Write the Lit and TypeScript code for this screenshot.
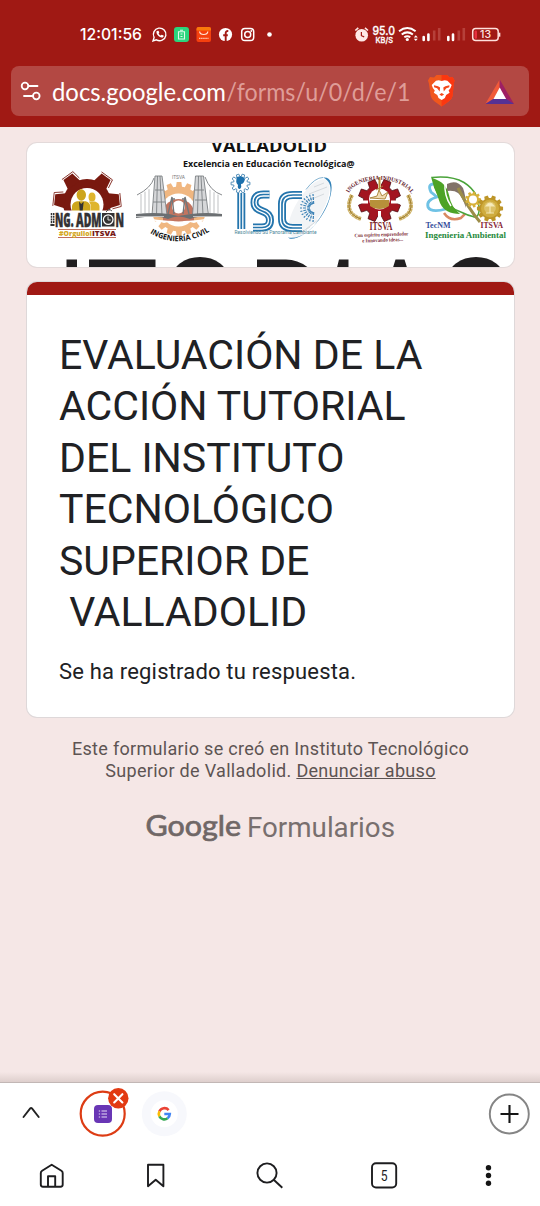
import { LitElement, html, svg, css } from "lit";
import { customElement } from "lit/decorators.js";

/** Outline of a cog wheel. */
function gear(cx: number, cy: number, outer: number, inner: number, teeth: number, turn = 0): string {
  const step = (Math.PI * 2) / teeth;
  const pts: string[] = [];
  for (let i = 0; i < teeth; i++) {
    const a = i * step + turn;
    for (const [r, o] of [[inner, -0.34], [outer, -0.22], [outer, 0.22], [inner, 0.34]]) {
      pts.push(`${(cx + r * Math.cos(a + o * step)).toFixed(2)},${(cy + r * Math.sin(a + o * step)).toFixed(2)}`);
    }
  }
  return `M${pts.join("L")}Z`;
}

/** Text fitted to a given width. */
const fit = (x: number, y: number, w: number, size: number, cls: string, text: string, fill: string) =>
  svg`<text x=${x} y=${y} textLength=${w} lengthAdjust="spacingAndGlyphs" font-size=${size} class=${cls} fill=${fill}>${text}</text>`;

const fonts = css`
  svg { display: block; flex: none; }
  .roboto { font-family: Roboto, sans-serif; }
  .medium { font-family: Roboto, sans-serif; font-weight: 500; }
  .inter { font-family: Inter, sans-serif; font-weight: 500; }
  .lato { font-family: Lato, sans-serif; }
  .open { font-family: "Open Sans", sans-serif; font-weight: 700; }
  .black { font-family: "Open Sans", sans-serif; font-weight: 800; }
  .serif { font-family: "Liberation Serif", serif; font-weight: 700; }
  .sans { font-family: "Liberation Sans", sans-serif; font-weight: 700; }
`;

@customElement("status-bar")
class StatusBar extends LitElement {
  static styles = [fonts, css`
    :host { display: flex; justify-content: space-between; height: 66px; padding: 22px 38px 0 78px; box-sizing: border-box; }
    .group { display: flex; }
  `];
  render() {
    const signal = (x: number) => svg`
      <path d="M${x} 37v3M${x + 4.700} 34.500v5.500" stroke="#fff" stroke-width="2.600" stroke-linecap="round"/>
      <path d="M${x + 10.5} 30.5v10M${x + 15.500} 28v12.5" stroke="#bd4d47" stroke-width="2.600" opacity=".75"/>`;
    return html`
      <div class="group">
        <svg width="72" height="26" viewBox="78 22 72 26">${fit(80, 40.3, 62, 16, "inter", "12:01:56", "#fff")}</svg>
        <svg width="126" height="26" viewBox="150 22 126 26" fill="none">
          <path d="M153 41l1.1-3.6a6.3 6.3 0 1 1 2.3 2.4z" stroke="#fff" stroke-width="1.4"/>
          <path d="M156.8 31c-1.6 2.2 2.7 7.3 5.8 6.4 1-.3 1.3-1.5.9-1.8l-1.8-.9-1 .9c-1-.3-1.8-1.2-2.1-2l.7-1-.8-1.9z" fill="#fff"/>
          <rect x="174" y="27" width="15" height="15" rx="3" fill="#2ad57c"/>
          <path d="M180 30.2h3M178.5 31.7h6v7.3h-6zM180.5 34h2M180.5 36.5h2" stroke="#dffbea" stroke-width="1.1"/>
          <rect x="196.5" y="27" width="14.5" height="15" rx="2" fill="#f5400e"/>
          <path d="M196.5 30.5v-1.5q0-2 2-2h10.500q2 0 2 2v1.500z" fill="#f9790b"/>
          <path d="M199.600 31.500q.2 3 4.100 3t4.100-3" stroke="#ffe3d6" stroke-width="1.200"/>
          <path d="M199 38.300h9.500" stroke="#ffc5b0" stroke-width="1.200" stroke-dasharray="1.500 .6"/>
          <circle cx="225.500" cy="34.500" r="6.600" fill="#fff"/>
          <path d="M225.700 41.200v-8.200q0-2.200 2.600-1.900M223.200 35.200h4.600" stroke="#a31b15" stroke-width="1.900"/>
          <rect x="241.700" y="28.500" width="12" height="12" rx="3.300" stroke="#fff" stroke-width="1.500"/>
          <circle cx="247.700" cy="34.500" r="3" stroke="#fff" stroke-width="1.500"/><circle cx="251.300" cy="31" r=".9" fill="#fff"/>
          <circle cx="269.500" cy="34.500" r="2.300" fill="#fff"/>
        </svg>
      </div>
      <svg width="150" height="26" viewBox="352 22 150 26" fill="none">
        <circle cx="361.700" cy="35.200" r="6.300" fill="#ffe9e6"/>
        <path d="M355.300 30.500l3-2.700M368 30.500l-3-2.700" stroke="#ffe9e6" stroke-width="1.600"/>
        <path d="M361.400 32v3.700l2.800 1.200" stroke="#a31b15" stroke-width="1.200"/>
        <g stroke="#fff" stroke-width=".3">${fit(372.500, 35.300, 22.500, 11.500, "inter", "95.0", "#fff")}
        ${fit(375.500, 42.500, 17.500, 8.200, "inter", "KB/S", "#fff")}</g>
        <g stroke="#fff" stroke-width="2"><path d="M399 31.200q8.300-6.400 16.600 0M401.700 34.500q5.600-4.300 11.200 0M404.300 37.300q3-2.200 6 0"/></g>
        <circle cx="407.300" cy="39.500" r="1.600" fill="#fff"/>
        <path d="M413.800 37.600l2-2.300 2 2.300zM413.800 38.800l2 2.300 2-2.300z" fill="#fff"/>
        ${signal(423.700)}${signal(448.300)}
        <rect x="472.700" y="28.600" width="25.500" height="12" rx="3" stroke="#ffe0dc" stroke-width="1.500"/>
        <path d="M499.600 32.700v4" stroke="#ffe0dc" stroke-width="1.500"/>
        <rect x="474.500" y="30.500" width="2.500" height="8.300" rx="1" fill="#e8303f"/>
        ${fit(480, 38, 11, 10, "inter", "13", "#ffe9e6")}
      </svg>`;
  }
}

@customElement("address-bar")
class AddressBar extends LitElement {
  static styles = [fonts, css`
    :host { display: flex; height: 50px; margin: 0 11px; border-radius: 8px; background: #b34843; align-items: center; }
  `];
  render() {
    return html`
      <svg width="40" height="50" viewBox="11 66 40 50" fill="none" stroke="#fff" stroke-width="1.800" stroke-linecap="round">
        <circle cx="25" cy="86" r="3.300"/><path d="M28.500 86H37.500M24 96h8.500"/><circle cx="36.300" cy="96" r="3.300"/>
      </svg>
      <svg width="365" height="50" viewBox="51 66 365 50">
        ${fit(52, 100.500, 174, 25, "lato", "docs.google.com", "#fff")}
        ${fit(226.500, 100.500, 184, 25, "lato", "/forms/u/0/d/e/1", "#df9d98")}
      </svg>
      <svg width="102" height="50" viewBox="416 66 102 50">
        <path d="M434 77.500l2.500-2.500h10.500l2.600 2.500 3-.5 2 3.500-.8 3-1.200 12.500q-.8 3.500-4 5.500l-7 5-7-5q-3-2-3.900-5.500l-1.800-12.500-.9-3 2-3.500z" fill="#f1571c"/>
        <path d="M441.600 75h5.400l2.600 2.500 3-.5 2 3.500-.8 3-1.200 12.500q-.8 3.500-4 5.500l-7 5z" fill="#fb3711"/>
        <path d="M436 80.700l2.700-.5 3 .7 3-.7 2.700.5 4.300 4.200-1.300 3.300-1.800 2.400 1 2.200-3.500 2.200-1.200 3-3.200 2-3.200-2-1.200-3-3.500-2.200 1-2.200-1.800-2.400-1.300-3.300z" fill="#fff"/>
        <path d="M434 85.300l4 .9 2.100 1.400-.5 4-2.500-3.300-3-1zM449.400 85.300l-4 .9-2.100 1.400.5 4 2.500-3.300 3-1zM439.300 94.500l2.400-1.500 2.400 1.500-2.400 1.500z" fill="#f3481a"/>
        <path d="M499.700 79.500L485.300 104l14.400-8.500z" fill="#f15a3a"/>
        <path d="M499.700 79.500L514 104l-14.300-8.500z" fill="#9e1f63"/>
        <path d="M485.300 104H514l-8-5.300h-12.500z" fill="#563195"/>
        <path d="M499.700 87.500l6.400 11.500h-12.600z" fill="#fff"/>
      </svg>`;
  }
}

@customElement("form-banner")
class FormBanner extends LitElement {
  static styles = [fonts, css`
    :host { display: block; box-sizing: border-box; border-radius: 10px; background: #fff; overflow: hidden; box-shadow: 0 0 0 1px #e3dada; }
  `];

  management() {
    const teeth = [-84, -36, 36, 84];
    return svg`
      <g fill="#79190f">
        <circle cx="87" cy="203" r="24"/>
        ${teeth.map((t) => svg`<path transform="rotate(${t} 87 203)" d="M79.500 181l2-10.500h11l2 10.500z"/>
          <path transform="rotate(${t} 87 203)" d="M80.500 169.300h13.500l1.500 9" fill="none" stroke="#79190f" stroke-width=".8"/>`)}
      </g>
      <circle cx="87" cy="204.500" r="16.500" fill="#fff"/>
      <rect x="49" y="210.500" width="77" height="30" fill="#fff"/>
      <ellipse cx="81.300" cy="195" rx="4.700" ry="5.800" fill="#cda51d"/>
      <path d="M72 210.500v-4q0-4 5-5.200h8.600q4.600 1.200 4.600 5.200v4z" fill="#cda51d"/>
      <ellipse cx="92" cy="197" rx="3.500" ry="4.500" fill="#dfb52e"/>
      <path d="M90.500 210.500v-6l-1.500-3h6q4.500 1.500 4.500 5v4z" fill="#dfb52e"/>
      <path d="M79 201.500l2.200 2.500 2.500-2.500-1 9h-3z" fill="#333"/>
      <path d="M51.500 213v13M53.700 213v10" stroke="#333" stroke-width="1.500" stroke-dasharray="2 .7"/>
      <path d="M50.500 225h4" stroke="#333" stroke-width="2"/>
      <g stroke="#333234" stroke-width=".5">
        ${fit(55, 226.500, 18.500, 19, "black", "NG.", "#333234")}
        ${fit(76, 226.500, 25.500, 19, "black", "ADM", "#333234")}
        ${fit(115.500, 226.500, 8.500, 19, "black", "N", "#333234")}
      </g>
      <rect x="102" y="213" width="12.500" height="13.500" fill="#333234"/>
      <circle cx="108.200" cy="219.600" r="4.800" fill="#333" stroke="#fff" stroke-width="1.200"/>
      <path d="M108 216.500v3.500h2.800" fill="none" stroke="#ddd" stroke-width="1"/>
      <path d="M106 212l3-3 3 2" fill="none" stroke="#555" stroke-width="1"/>
      <path d="M58 229.500h58M58 237.500h58" stroke="#b04a35" stroke-width=".8"/>
      ${fit(59, 236, 33, 6.500, "black", "#OrgulloI", "#d5a824")}
      ${fit(92, 236.200, 24, 7.500, "black", "ITSVA", "#771b17")}`;
  }

  civil() {
    const hangers = [141, 145, 149, 210, 214, 218];
    return svg`
      <path d=${gear(179, 209, 27, 22.500, 16)} fill="#f0b781"/>
      <ellipse cx="178.500" cy="210" rx="17" ry="16.500" fill="#fff"/>
      <path d="M163 211a16 16 0 0 1 31 0v10h-31z" fill="#c37560"/>
      <circle cx="178.500" cy="207" r="6.500" fill="#fff"/>
      <path d="M136 216q42 10 86 0v3q-20 .5-28 4-15-5-30 0-10-3.500-28-4z" fill="#fff"/>
      <path d="M170 220q8.500-3 17 0-8.500 3-17 0z" fill="#c37560"/>
      <path d="M168 214l4-17 2 17M189 214l-4-17-2 17M172 199h3M182 199h3" fill="none" stroke="#73777a" stroke-width="1.400"/>
      <g fill="#d6d7d9" stroke="#7d8184" stroke-width=".9">
        <path d="M155 176h7l5 39h-15zM195.500 176h8l5 39h-16z"/>
        <path d="M157.500 176l-1 39M160 176l2 39M155 190h8M198.500 176l-1 39M201 176l2 39M195 190h9M195 200h12M153 202h12"/>
      </g>
      <path d="M137 195q14-7 17-17M205 177q5 14 17 18" fill="none" stroke="#888b8e" stroke-width="1"/>
      <g stroke="#a5a7aa" stroke-width=".7">${hangers.map((x) => svg`<path d="M${x} ${x < 180 ? 194 - (x - 141) * 0.6 : 185 + (x - 202) * 0.6}V213"/>`)}</g>
      <path d="M136 214q18-2 33 0l9 2 13-2q16-2 31 0v3q-22-2-32 2-12 -5-22 0-10-4-32-1z" fill="#6b6f72"/>
      <path d="M136 216.500h28M193 216.500h29" stroke="#bfc1c2" stroke-width="1"/>
      ${fit(172, 179, 13, 4.500, "roboto", "ITSVA", "#777")}
      <path id="civil-arc" d="M150 233Q179 251 212 230" fill="none"/>
      <text class="open" font-size="7.600" fill="#111"><textPath href="#civil-arc" textLength="63" lengthAdjust="spacingAndGlyphs">INGENIERÍA CIVIL</textPath></text>`;
  }

  systems() {
    const rays = Array.from({ length: 13 }, (_, i) => -1.5 + i * 0.25 + Math.PI);
    const letters = "M241.300 193v36M269.500 194.500h-6q-9 0-9 8 0 6 7.500 8.500 8 2.500 8 9 0 7.500-8 7.500h-9M302 195h-9q-11 0-11 9v15q0 9 11 9h9";
    return svg`
      <ellipse cx="309" cy="208" rx="33" ry="13" transform="rotate(-58 309 208)" fill="#f2f4f6"/>
      <path d="M323 177.500c15-2 9 28-7 46-10 12-24 18-28 14 12 2 24-7 32-20 12-18 15-35 3-40z" fill="#3181b7"/>
      <path d="M323 177.500q-8 0-17 12" fill="none" stroke="#86b4d2"/>
      <g stroke="#d5dade" stroke-width="1"><path d="M314 187l10-4M309 194l18-7M307 201l17-7M306 229l12-9M300 233l10-6"/></g>
      ${rays.map((a) => svg`<path d="M${(314 + 4 * Math.cos(a)).toFixed(1)} ${(208 + 4 * Math.sin(a)).toFixed(1)}L${(314 + 14 * Math.cos(a)).toFixed(1)} ${(208 + 14 * Math.sin(a)).toFixed(1)}" stroke="#3c82b6" stroke-width="1.200" stroke-dasharray="3 1"/>`)}
      <path d=${gear(240.500, 183.500, 9.500, 7, 10)} fill="#fff" stroke="#5590ba" stroke-width="1"/>
      <path d="M237 177q6-2 8 2-1 5-4 5 1 3-1 5-3 0-2-4-3-3-1-8z" fill="#1c70ad"/>
      <g fill="none" stroke="#2475ad" stroke-width="8"><path d=${letters}/></g>
      <g fill="none" stroke="#fff" stroke-width="4.400"><path d=${letters}/></g>
      <g fill="none" stroke="#2475ad" stroke-width="1.700"><path d=${letters}/></g>
      ${fit(234.500, 234, 82, 5.500, "roboto", "Resolviendo Su Panorama Cambiante", "#4c8698")}`;
  }

  industrial() {
    return svg`
      <path d=${gear(379.500, 200.500, 21.500, 16, 8, 0.39)} fill="#a31520" stroke="#4c0b12" stroke-width=".8"/>
      <circle cx="379.500" cy="199" r="10.500" fill="#fff"/>
      <path d="M379.500 178v11M355 202h13M391 202h13M379.500 211v12" stroke="#fff" stroke-width="3"/>
      <path d="M379.500 177v13" stroke="#b79336" stroke-width="2"/>
      <path d="M370 200h19v6q-4 3-9.500 3t-9.500-3z" fill="#b7903a"/>
      <path d="M370 198l7-2 2-6 3 6 6-4-3 7zM376 190l7-4" fill="#f0dcb2" stroke="#a77f34" stroke-width=".9"/>
      <g fill="none" stroke-width="4" stroke="#cfb46b"><path d="M352 195q-9 18 9 24M408 195q9 18-9 24" stroke-dasharray="3 .4"/></g>
      <g fill="none" stroke-width="1" stroke="#9c7b2d"><path d="M352 195q-9 18 9 24M408 195q9 18-9 24"/></g>
      <path id="industrial-arc" d="M349 193C357 176 400 174 412 195" fill="none"/>
      <text class="serif" font-size="5.800" fill="#64202b"><textPath href="#industrial-arc" textLength="71" lengthAdjust="spacingAndGlyphs">INGENIERIA INDUSTRIAL</textPath></text>
      ${fit(369.500, 230.300, 23, 12.500, "serif", "ITSVA", "#7a1c28")}
      <g transform="rotate(-2 380 236)">${fit(354.500, 236.300, 54, 5.200, "serif", "Con espíritu emprendedor", "#80303a")}
      ${fit(362, 241.800, 41, 5.200, "serif", "e Innovando ideas...", "#80303a")}</g>`;
  }

  environmental() {
    return svg`
      <path d="M434 184q-7 0-3 8l6 5q-11 3-9 10 3 6 18 2" fill="none" stroke="#6fc2e5" stroke-width="2.800"/>
      <path d="M444 213q6 9 17 5l8-8" fill="none" stroke="#d98961" stroke-width="2.500"/>
      <path d="M432 177.500q20-2 32 5 16 10 15 29-1 7-6 5-5-1-11-4-16-6-23-16-5-9-7-19z" fill="#fff" stroke="#4aa33a" stroke-width="1.500"/>
      <path d="M432 178c10 3 15 8 17 17q2 12 11 19-15 0-20-11-5-13-8-25z" fill="#4da326"/>
      <path d="M445 182q-1 14 6 24" fill="none" stroke="#fff" stroke-width="1.500"/>
      <path d="M447 184q10-5 16 4 3 8 3 20-4-12-8-15t-11-2z" fill="#827269"/>
      <path d="M458 188q10 20 22 34" fill="none" stroke="#9c8d49" stroke-width="3"/>
      <path d=${gear(473, 199.500, 8, 6, 9)} fill="#d8b139"/><circle cx="473" cy="199.500" r="4" fill="#fff"/>
      <path d=${gear(490, 208.500, 13.200, 10.500, 10)} fill="#bd9528"/>
      <circle cx="490" cy="208.500" r="9" fill="#cfac3e"/><circle cx="490" cy="207.500" r="6" fill="#dcc168"/>
      <path d="M490 213v-7M486 206q4-6 8 0zM486 213h8" stroke="#f4e8b4" stroke-width="1.200" fill="#f8edc0"/>
      ${fit(425.500, 228.300, 25, 7.500, "serif", "TecNM", "#344c9b")}
      ${fit(480.500, 228.300, 22.500, 7.500, "serif", "ITSVA", "#852333")}
      ${fit(425, 238.300, 81, 8.800, "serif", "Ingenieria Ambiental", "#268a3b")}`;
  }

  render() {
    return html`
      <svg width="487" height="124" viewBox="27 143 487 124">
        ${fit(211, 152.300, 116, 16, "open", "VALLADOLID", "#111")}
        ${fit(183, 166.700, 171.500, 9.500, "open", "Excelencia en Educación Tecnológica@", "#111")}
        ${this.management()}${this.civil()}${this.systems()}${this.industrial()}${this.environmental()}
        <g fill="#211f20">
          <path d="M66.500 259.500h10.500v8h-10.500zM89 259.500h66.500v8H89zM257 259.500h29q12 0 22 8h-51zM339 259.500h9.500v8H337zM395.500 259.500h9l2.500 8h-14z"/>
          <ellipse cx="200" cy="278" rx="28" ry="21"/><ellipse cx="476" cy="278" rx="28" ry="21"/>
        </g>
      </svg>`;
  }
}

@customElement("confirmation-card")
class ConfirmationCard extends LitElement {
  static styles = css`
    :host { display: block; box-sizing: border-box; height: 435px; border-radius: 10px; background: #fff; overflow: hidden; box-shadow: 0 0 0 1px #ded8d9; font-family: Roboto, sans-serif; color: #202124; }
    .stripe { height: 13px; background: #a01914; }
    .body { padding: 35px 32px 0; }
    h1 { margin: 0; font-size: 41px; line-height: 51.400px; font-weight: 400; white-space: pre; }
    p { margin: 19px 0 0; font-size: 22px; line-height: 30px; letter-spacing: .18px; }
  `;
  render() {
    const title = ["EVALUACIÓN DE LA", "ACCIÓN TUTORIAL", "DEL INSTITUTO", "TECNOLÓGICO", "SUPERIOR DE", "\u00a0VALLADOLID"];
    return html`
      <div class="stripe"></div>
      <div class="body">
        <h1>${title.join("\n")}</h1>
        <p>Se ha registrado tu respuesta.</p>
      </div>`;
  }
}

@customElement("form-footer")
class FormFooter extends LitElement {
  static styles = [fonts, css`
    :host { display: flex; flex-direction: column; align-items: center; font-family: Roboto, sans-serif; color: #5d5453; }
    p { margin: 21px 0 0; font-size: 18px; line-height: 22px; letter-spacing: .31px; text-align: center; white-space: nowrap; }
    a { color: inherit; text-decoration: underline; }
    .brand { margin-top: 22px; }
  `];
  render() {
    return html`
      <p>Este formulario se creó en Instituto Tecnológico<br />Superior de Valladolid. <a>Denunciar abuso</a></p>
      <svg class="brand" width="252" height="44" viewBox="144 804 252 44">
        <g stroke="#706766" stroke-width=".7">${fit(144.500, 836, 95.500, 29, "lato", "Google", "#706766")}</g>
        ${fit(246, 836.500, 148, 28, "roboto", "Formularios", "#786f6e")}
      </svg>`;
  }
}

@customElement("browser-controls")
class BrowserControls extends LitElement {
  static styles = [fonts, css`
    :host { display: block; height: 123px; background: #fff; border-top: 1px solid #c2b7b5; }
    .row { display: flex; justify-content: space-between; }
  `];
  render() {
    return html`
      <div class="row">
        <svg width="200" height="62" viewBox="0 1083 200 62" fill="none">
          <path d="M23.500 1117l6.700-8.500q.9-.9 1.800 0l6.700 8.500" stroke="#222" stroke-width="1.900" stroke-linecap="round"/>
          <circle cx="102.700" cy="1113.700" r="22" stroke="#dd3c14" stroke-width="2.200"/>
          <rect x="94" y="1105" width="18" height="18" rx="4" fill="#6936b5"/>
          <path d="M101.500 1111h5.500M101.500 1114h5.500M101.500 1117h5.500" stroke="#e6dcf6" stroke-width="1.100"/>
          <path d="M98.800 1111h1.300M98.800 1114h1.300M98.800 1117h1.300" stroke="#e6dcf6" stroke-width="1.200"/>
          <circle cx="118.300" cy="1098.300" r="10.200" fill="#e23a12"/>
          <path d="M114.200 1094.200l8.200 8.200M122.400 1094.200l-8.200 8.200" stroke="#fff" stroke-width="2.100" stroke-linecap="round"/>
          <circle cx="164.300" cy="1113.800" r="22.500" fill="#f7f8fc"/><circle cx="164.300" cy="1113.800" r="13.500" fill="#fff"/>
          <g stroke-width="2.600">
            <path d="M168.600 1110.100a5.500 5.500 0 0 0-9.200 1.300" stroke="#ea4335"/>
            <path d="M159.400 1111.400a5.500 5.500 0 0 0 0 5" stroke="#fbbc05"/>
            <path d="M159.400 1116.400a5.500 5.500 0 0 0 8.200 1.800" stroke="#34a853"/>
            <path d="M167.600 1118.200a5.500 5.500 0 0 0 2.200-4.200h-5.500" stroke="#4285f4"/>
          </g>
        </svg>
        <svg width="60" height="62" viewBox="480 1083 60 62" fill="none">
          <circle cx="509.300" cy="1114" r="19.500" stroke="#858585" stroke-width="1.900"/>
          <path d="M500.500 1114h18M509.500 1105v18" stroke="#151515" stroke-width="2.100"/>
        </svg>
      </div>
      <svg width="540" height="61" viewBox="0 1145 540 61" fill="none" stroke="#1d1d1f" stroke-width="1.900" stroke-linejoin="round">
        <path d="M51.700 1164.700l-9.600 6q-1.300.8-1.300 2.300v11.500q0 2.200 2.200 2.200h17.500q2.200 0 2.200-2.200v-11.500q0-1.500-1.300-2.300zM48 1186.500v-10.300h7.200v10.300"/>
        <path d="M148 1164.800h15.400v21.400l-7.700-6.500-7.700 6.500z"/>
        <circle cx="267" cy="1173" r="9.600"/><path d="M274 1180l8.300 7.800"/>
        <rect x="372" y="1163.300" width="24.200" height="24.200" rx="4"/>
        <g stroke="none">${fit(380.800, 1180.700, 6.800, 14, "roboto", "5", "#1d1d1f")}
          <g fill="#151515"><circle cx="488.500" cy="1167.700" r="2.700"/><circle cx="488.500" cy="1175.500" r="2.700"/><circle cx="488.500" cy="1183.300" r="2.700"/></g>
        </g>
      </svg>`;
  }
}

@customElement("app-root")
class AppRoot extends LitElement {
  static styles = css`
    :host { display: flex; flex-direction: column; height: 1206px; width: 540px; background: #f5e7e6; overflow: hidden; }
    header { height: 127px; background: #a01914; flex: none; }
    main { flex: 1; padding: 16px 26px 0 27px; display: flex; flex-direction: column; }
    confirmation-card { margin-top: 15px; flex: none; }
    form-banner { height: 124px; flex: none; }
    .shade { height: 10px; flex: none; background: linear-gradient(#f5e7e6, #decfcd); }
  `;
  render() {
    return html`
      <header><status-bar></status-bar><address-bar></address-bar></header>
      <main>
        <form-banner></form-banner>
        <confirmation-card></confirmation-card>
        <form-footer></form-footer>
      </main>
      <div class="shade"></div>
      <browser-controls></browser-controls>`;
  }
}
